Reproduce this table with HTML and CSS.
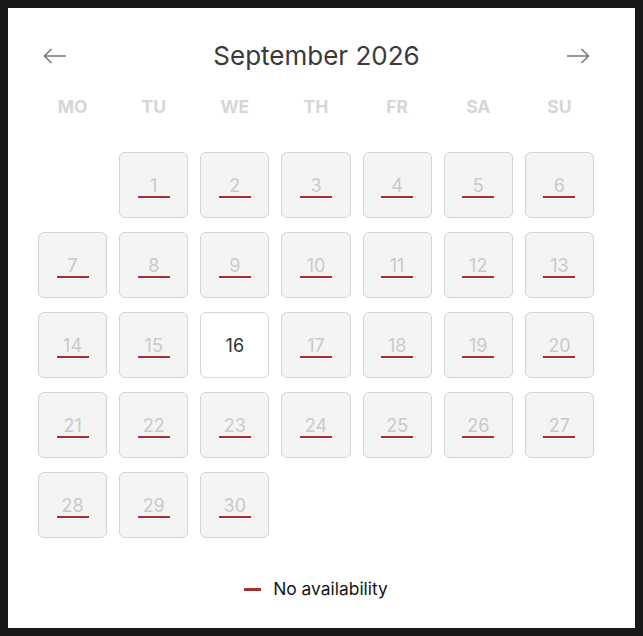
FILE: index.html
```html
<!DOCTYPE html>
<html lang="en">
<head>
<meta charset="utf-8">
<title>Calendar</title>
<link rel="stylesheet" href="styles.css">
</head>
<body>
<div class="card">
  <div class="header">
    <button class="nav" aria-label="Previous month">
      <svg width="24" height="16" viewBox="0 0 24 16"><path d="M23 8H1.5M8.5 1L1.5 8L8.5 15" fill="none" stroke="#777" stroke-width="1.5"/></svg>
    </button>
    <div class="title">September 2026</div>
    <button class="nav" aria-label="Next month">
      <svg width="24" height="16" viewBox="0 0 24 16"><path d="M1 8H22.5M15.5 1L22.5 8L15.5 15" fill="none" stroke="#777" stroke-width="1.5"/></svg>
    </button>
  </div>
  <div class="weekdays">
    <div>MO</div><div>TU</div><div>WE</div><div>TH</div><div>FR</div><div>SA</div><div>SU</div>
  </div>
  <div class="days">
    <div class="day empty"></div>
    <div class="day na">1</div>
    <div class="day na">2</div>
    <div class="day na">3</div>
    <div class="day na">4</div>
    <div class="day na">5</div>
    <div class="day na">6</div>
    <div class="day na">7</div>
    <div class="day na">8</div>
    <div class="day na">9</div>
    <div class="day na">10</div>
    <div class="day na">11</div>
    <div class="day na">12</div>
    <div class="day na">13</div>
    <div class="day na">14</div>
    <div class="day na">15</div>
    <div class="day avail">16</div>
    <div class="day na">17</div>
    <div class="day na">18</div>
    <div class="day na">19</div>
    <div class="day na">20</div>
    <div class="day na">21</div>
    <div class="day na">22</div>
    <div class="day na">23</div>
    <div class="day na">24</div>
    <div class="day na">25</div>
    <div class="day na">26</div>
    <div class="day na">27</div>
    <div class="day na">28</div>
    <div class="day na">29</div>
    <div class="day na">30</div>
  </div>
  <div class="legend">
    <span class="dash"></span>
    <span class="legend-text">No availability</span>
  </div>
</div>
</body>
</html>
```

FILE: styles.css
```css
html {
  background: #181818;
}
body {
  margin: 0;
  padding: 8px;
  font-family: Inter, "Liberation Sans", sans-serif;
}
.card {
  background: #fff;
  width: 627px;
  height: 620px;
  box-sizing: border-box;
  padding: 32px 41px 0 30px;
}
.header {
  display: flex;
  align-items: center;
  justify-content: space-between;
  height: 32px;
  padding: 0 4px 0 5px;
}
.nav {
  background: none;
  border: 0;
  padding: 0;
  display: flex;
  cursor: pointer;
}
.title {
  font-size: 26px;
  color: #3a3a3a;
  line-height: 32px;
}
.weekdays {
  display: grid;
  grid-template-columns: repeat(7, 1fr);
  column-gap: 12px;
  margin-top: 23px;
  line-height: 24px;
  font-size: 17.5px;
  font-weight: 700;
  color: #d6d6d6;
  text-align: center;
}
.days {
  display: grid;
  grid-template-columns: repeat(7, 1fr);
  column-gap: 12px;
  row-gap: 14px;
  margin-top: 33px;
}
.day {
  height: 66px;
  box-sizing: border-box;
  border: 1px solid #d4d4d4;
  border-radius: 6px;
  display: flex;
  align-items: center;
  justify-content: center;
  font-size: 18px;
  position: relative;
}
.day.empty {
  border: 0;
}
.day.na {
  background: #f4f4f4;
  color: #c9c9c9;
}
.day.na::after {
  content: "";
  position: absolute;
  left: 50%;
  top: 43px;
  width: 32px;
  height: 2px;
  margin-left: -16px;
  background: #a63030;
}
.day.avail {
  background: #fff;
  color: #333;
}
.legend {
  display: flex;
  align-items: center;
  justify-content: center;
  gap: 12px;
  margin-top: 39px;
  line-height: 24px;
}
.dash {
  width: 17px;
  height: 3px;
  background: #a63030;
}
.legend-text {
  font-size: 17.4px;
  color: #161616;
}
```
